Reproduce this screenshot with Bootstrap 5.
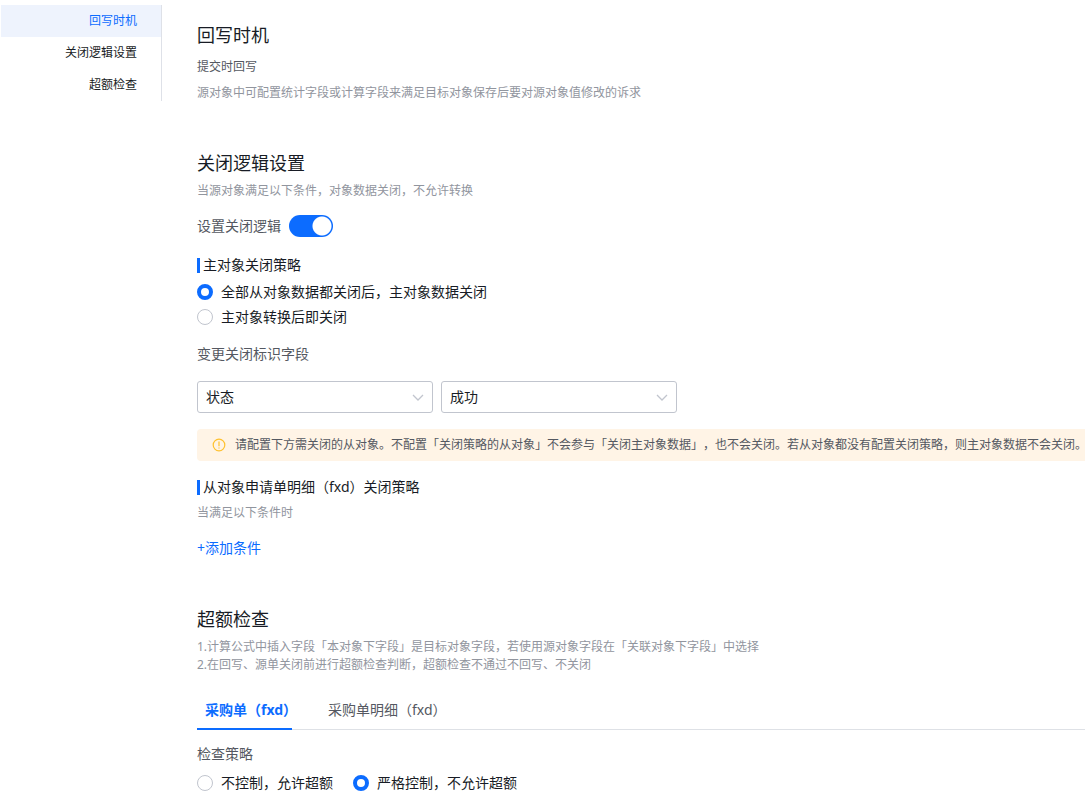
<!DOCTYPE html>
<html lang="zh-CN">
<head>
<meta charset="utf-8">
<meta name="viewport" content="width=device-width, initial-scale=1">
<title>回写时机</title>
<link href="https://cdn.jsdelivr.net/npm/bootstrap@5.3.0/dist/css/bootstrap.min.css" rel="stylesheet">
<style>
  :root { --brand: #0c6cff; --ink: #181c25; --ink-2: #545861; --ink-3: #91959e; --edge: #c1c5ce; }
  body { font-family: "Noto Sans", "Noto Sans CJK SC", sans-serif; font-size: 14px; line-height: 20px; color: var(--ink); overflow-x: hidden; text-spacing-trim: space-all; }
  .side { width: 161px; margin-left: 1px; margin-top: 5px; border-right: 1px solid #dee1e8; }
  .side .nav-link { font-size: 12px; line-height: 16px; padding: 8px 24px; text-align: right; color: var(--ink); }
  .side .nav-link.active { background: #eef3fd; color: var(--brand); }
  .main { margin-left: 35px; padding-top: 23px; min-width: 0; }
  .main section + section { margin-top: 49px; }
  h2 { font-size: 18px; line-height: 24px; font-weight: 400; margin: 0; }
  h3 { font-size: 14px; line-height: 20px; font-weight: 400; margin: 0; display: flex; align-items: center; }
  h3::before { content: ""; width: 3px; height: 15px; margin-right: 3px; background: var(--brand); }
  .hint { font-size: 12px; line-height: 18px; color: var(--ink-3); margin: 7px 0 0; }
  .timing-mode { color: var(--ink-2); margin-top: 11px; }
  .soft { color: var(--ink-2); }
  .form-switch.close-switch { padding: 0; margin: 15px 0 18px; min-height: 22px; }
  .close-switch .form-check-input { width: 44px; height: 22px; margin: 0; float: none; border: 0; background-color: var(--brand);
    background-image: radial-gradient(circle at 33px 11px, #fff 8px, #fff 9px, transparent 10px); background-size: 100% 100%; }
  .picks { display: grid; gap: 1px; margin-top: 5px; }
  .pick { min-height: 24px; padding: 0; margin: 0; display: flex; align-items: center; gap: 8px; }
  .pick .form-check-input { width: 16px; height: 16px; margin: 0; float: none; border: 1px solid var(--edge); }
  .pick .form-check-input:checked { border: 4px solid var(--brand); background: #fff; }
  .field-label { margin-top: 15px; }
  .fields { margin-top: 17px; }
  .field { width: 236px; height: 32px; font-size: 14px; line-height: 20px; padding: 5px 32px 5px 8px; border: 1px solid var(--edge); border-radius: 3px; color: var(--ink);
    background-image: url("data:image/svg+xml,%3Csvg xmlns='http://www.w3.org/2000/svg' viewBox='0 0 12 12'%3E%3Cpath d='M1 4l5 5 5-5' fill='none' stroke='%23c1c5ce' stroke-width='1.3'/%3E%3C/svg%3E"); background-size: 12px 12px; background-position: right 8px center; }
  .notice { background: #fff4e6; border: 0; border-radius: 4px 0 0 4px; color: var(--ink-2); font-size: 12px; line-height: 18px; padding: 7px 0 7px 15px; margin: 16px 0; white-space: nowrap; gap: 9px; }
  .add-row { margin-top: 16px; }
  .add { color: var(--brand); text-decoration: none; }
  .check-tabs { margin-top: 16px; border-bottom: 1px solid #dee1e6; gap: 28px; }
  .check-tabs .nav-link { border: 0; border-bottom: 2px solid transparent; border-radius: 0; margin-bottom: -1px; padding: 10px 0 8px 8px; color: var(--ink-2); white-space: nowrap; text-align: left; }
  .check-tabs .nav-link.active { width: 95px; color: var(--brand); font-weight: 700; border-color: var(--brand); background: none; }
  .strategy { margin-top: 14px; }
  .strategy-picks { margin-top: 7px; gap: 20px; }
</style>
</head>
<body>
<div class="d-flex align-items-start">
  <nav class="side nav flex-column flex-shrink-0">
    <a class="nav-link active" href="#timing">回写时机</a>
    <a class="nav-link" href="#closing">关闭逻辑设置</a>
    <a class="nav-link" href="#excess">超额检查</a>
  </nav>
  <main class="main flex-grow-1">
    <section id="timing">
      <h2>回写时机</h2>
      <p class="hint timing-mode">提交时回写</p>
      <p class="hint mt-2">源对象中可配置统计字段或计算字段来满足目标对象保存后要对源对象值修改的诉求</p>
    </section>
    <section id="closing">
      <h2>关闭逻辑设置</h2>
      <p class="hint">当源对象满足以下条件，对象数据关闭，不允许转换</p>
      <div class="form-check form-switch close-switch d-flex align-items-center gap-2">
        <label class="soft" for="sw">设置关闭逻辑</label>
        <input class="form-check-input" type="checkbox" role="switch" id="sw" checked>
      </div>
      <h3>主对象关闭策略</h3>
      <div class="picks">
        <div class="form-check pick"><input class="form-check-input" type="radio" name="main" id="m1" checked><label for="m1">全部从对象数据都关闭后，主对象数据关闭</label></div>
        <div class="form-check pick"><input class="form-check-input" type="radio" name="main" id="m2"><label for="m2">主对象转换后即关闭</label></div>
      </div>
      <div class="soft field-label">变更关闭标识字段</div>
      <div class="d-flex gap-2 fields">
        <select class="form-select field" aria-label="标识字段"><option>状态</option></select>
        <select class="form-select field" aria-label="字段值"><option>成功</option></select>
      </div>
      <div class="alert notice d-flex align-items-center" role="alert">
        <svg class="flex-shrink-0" width="14" height="14" viewBox="0 0 14 14" fill="none" stroke="#ffc12e" stroke-width="1.2"><circle cx="7" cy="7" r="5.8"/><path d="M7 3.6v4.6M7 9.4v1.2"/></svg>
        <span>请配置下方需关闭的从对象。不配置「关闭策略的从对象」不会参与「关闭主对象数据」，也不会关闭。若从对象都没有配置关闭策略，则主对象数据不会关闭。</span>
      </div>
      <h3>从对象申请单明细（fxd）关闭策略</h3>
      <p class="hint">当满足以下条件时</p>
      <div class="add-row"><a class="add" href="#">+添加条件</a></div>
    </section>
    <section id="excess">
      <h2>超额检查</h2>
      <p class="hint">1.计算公式中插入字段「本对象下字段」是目标对象字段，若使用源对象字段在「关联对象下字段」中选择<br>2.在回写、源单关闭前进行超额检查判断，超额检查不通过不回写、不关闭</p>
      <div class="nav nav-tabs check-tabs" role="tablist">
        <button class="nav-link active" type="button" role="tab" aria-selected="true">采购单（fxd）</button>
        <button class="nav-link" type="button" role="tab" aria-selected="false">采购单明细（fxd）</button>
      </div>
      <div class="soft strategy">检查策略</div>
      <div class="d-flex strategy-picks">
        <div class="form-check pick"><input class="form-check-input" type="radio" name="chk" id="c1"><label for="c1">不控制，允许超额</label></div>
        <div class="form-check pick"><input class="form-check-input" type="radio" name="chk" id="c2" checked><label for="c2">严格控制，不允许超额</label></div>
      </div>
    </section>
  </main>
</div>
<script src="https://cdn.jsdelivr.net/npm/bootstrap@5.3.0/dist/js/bootstrap.bundle.min.js"></script>
</body>
</html>
